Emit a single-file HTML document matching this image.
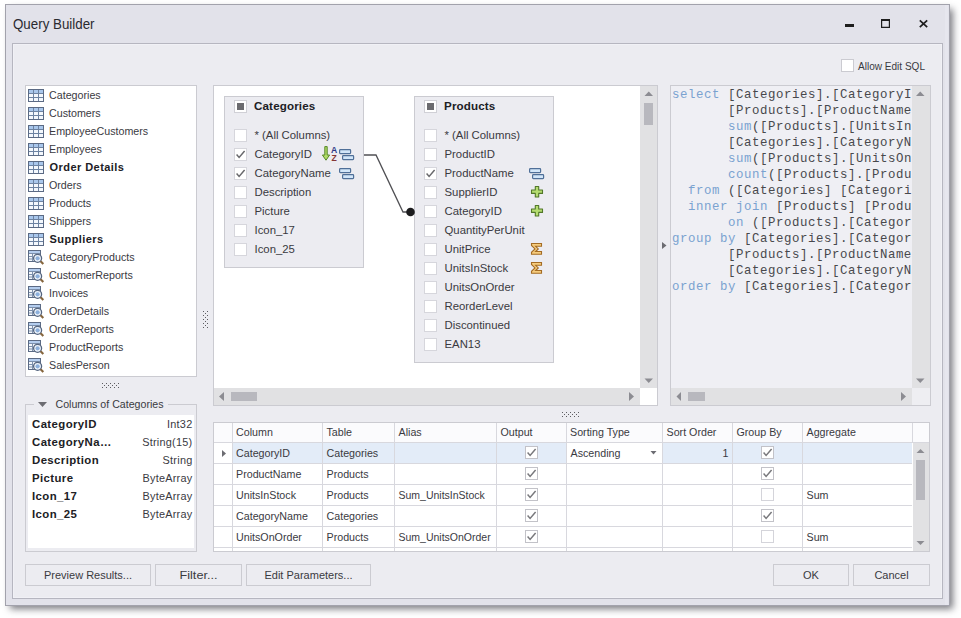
<!DOCTYPE html><html><head><meta charset="utf-8"><style>*{margin:0;padding:0}html,body{width:961px;height:618px;overflow:hidden;background:#fff}#sh{position:absolute;left:5px;top:4px;width:945px;height:602px;box-shadow:4px 4px 7px -1px rgba(40,40,50,.6);background:#e2e2ea}svg{position:absolute;left:0;top:0}text{font-family:"Liberation Sans",sans-serif}.m{font-family:"Liberation Mono",monospace}</style></head><body><div id="sh"></div>
<svg width="961" height="618" viewBox="0 0 961 618" shape-rendering="crispEdges">
<rect x="5" y="4" width="945" height="602" fill="#e2e2ea" />
<rect x="5" y="4" width="945" height="1" fill="#a2a2ac" />
<rect x="5" y="605" width="945" height="1" fill="#a2a2ac" />
<rect x="5" y="4" width="1" height="602" fill="#a2a2ac" />
<rect x="949" y="4" width="1" height="602" fill="#a2a2ac" />
<rect x="945" y="5" width="3" height="600" fill="#e6e6ee" />
<text x="13" y="29" font-size="14" fill="#2a2a30" textLength="81.5" lengthAdjust="spacingAndGlyphs" >Query Builder</text>
<rect x="845" y="24" width="9" height="3" fill="#1e1e1e" />
<path d="M881.6 19.5H889.4V27.4H881.6Z" fill="none" stroke="#1e1e1e" stroke-width="1.2" shape-rendering="auto"/>
<rect x="881" y="19" width="9" height="2" fill="#1e1e1e" />
<path d="M919.8 20.3 L927.2 27.2 M927.2 20.3 L919.8 27.2" stroke="#1e1e1e" stroke-width="1.7" shape-rendering="auto"/>
<rect x="12" y="43" width="931" height="556" fill="#ececf1" />
<rect x="12" y="43" width="931" height="1" fill="#b6b6c0" />
<rect x="12" y="598" width="931" height="1" fill="#b6b6c0" />
<rect x="12" y="43" width="1" height="556" fill="#b6b6c0" />
<rect x="942" y="43" width="1" height="556" fill="#b6b6c0" />
<rect x="13" y="44" width="929" height="1" fill="#f1f1f6" />
<rect x="13" y="597" width="929" height="1" fill="#f1f1f6" />
<rect x="13" y="44" width="1" height="554" fill="#f1f1f6" />
<rect x="941" y="44" width="1" height="554" fill="#f1f1f6" />
<rect x="841" y="59" width="13" height="13" fill="#fff" />
<rect x="841" y="59" width="13" height="1" fill="#cbcbd1" />
<rect x="841" y="71" width="13" height="1" fill="#cbcbd1" />
<rect x="841" y="59" width="1" height="13" fill="#cbcbd1" />
<rect x="853" y="59" width="1" height="13" fill="#cbcbd1" />
<text x="858" y="70" font-size="10.5" fill="#3a3a3f" textLength="67" lengthAdjust="spacingAndGlyphs" >Allow Edit SQL</text>
<rect x="25" y="85" width="172" height="292" fill="#ffffff" />
<rect x="25" y="85" width="172" height="1" fill="#cbcbd1" />
<rect x="25" y="376" width="172" height="1" fill="#cbcbd1" />
<rect x="25" y="85" width="1" height="292" fill="#cbcbd1" />
<rect x="196" y="85" width="1" height="292" fill="#cbcbd1" />
<g transform="translate(28,89)" shape-rendering="auto"><rect x="0.5" y="0.5" width="15" height="12" fill="#f4f8fd" stroke="#5b6a84"/><rect x="1" y="1" width="14" height="3.5" fill="#a9c7ec"/><path d="M1 4.5H15M1 8.5H15M5.5 1V12M10.5 1V12" stroke="#6d83a2" stroke-width="1"/></g>
<text x="49" y="99" font-size="10.7" fill="#3a3a3f" >Categories</text>
<g transform="translate(28,107)" shape-rendering="auto"><rect x="0.5" y="0.5" width="15" height="12" fill="#f4f8fd" stroke="#5b6a84"/><rect x="1" y="1" width="14" height="3.5" fill="#a9c7ec"/><path d="M1 4.5H15M1 8.5H15M5.5 1V12M10.5 1V12" stroke="#6d83a2" stroke-width="1"/></g>
<text x="49" y="117" font-size="10.7" fill="#3a3a3f" >Customers</text>
<g transform="translate(28,125)" shape-rendering="auto"><rect x="0.5" y="0.5" width="15" height="12" fill="#f4f8fd" stroke="#5b6a84"/><rect x="1" y="1" width="14" height="3.5" fill="#a9c7ec"/><path d="M1 4.5H15M1 8.5H15M5.5 1V12M10.5 1V12" stroke="#6d83a2" stroke-width="1"/></g>
<text x="49" y="135" font-size="10.7" fill="#3a3a3f" >EmployeeCustomers</text>
<g transform="translate(28,143)" shape-rendering="auto"><rect x="0.5" y="0.5" width="15" height="12" fill="#f4f8fd" stroke="#5b6a84"/><rect x="1" y="1" width="14" height="3.5" fill="#a9c7ec"/><path d="M1 4.5H15M1 8.5H15M5.5 1V12M10.5 1V12" stroke="#6d83a2" stroke-width="1"/></g>
<text x="49" y="153" font-size="10.7" fill="#3a3a3f" >Employees</text>
<g transform="translate(28,161)" shape-rendering="auto"><rect x="0.5" y="0.5" width="15" height="12" fill="#f4f8fd" stroke="#5b6a84"/><rect x="1" y="1" width="14" height="3.5" fill="#a9c7ec"/><path d="M1 4.5H15M1 8.5H15M5.5 1V12M10.5 1V12" stroke="#6d83a2" stroke-width="1"/></g>
<text x="49.5" y="171" font-size="11" fill="#202024" font-weight="bold" letter-spacing="0.45" >Order Details</text>
<g transform="translate(28,179)" shape-rendering="auto"><rect x="0.5" y="0.5" width="15" height="12" fill="#f4f8fd" stroke="#5b6a84"/><rect x="1" y="1" width="14" height="3.5" fill="#a9c7ec"/><path d="M1 4.5H15M1 8.5H15M5.5 1V12M10.5 1V12" stroke="#6d83a2" stroke-width="1"/></g>
<text x="49" y="189" font-size="10.7" fill="#3a3a3f" >Orders</text>
<g transform="translate(28,197)" shape-rendering="auto"><rect x="0.5" y="0.5" width="15" height="12" fill="#f4f8fd" stroke="#5b6a84"/><rect x="1" y="1" width="14" height="3.5" fill="#a9c7ec"/><path d="M1 4.5H15M1 8.5H15M5.5 1V12M10.5 1V12" stroke="#6d83a2" stroke-width="1"/></g>
<text x="49" y="207" font-size="10.7" fill="#3a3a3f" >Products</text>
<g transform="translate(28,215)" shape-rendering="auto"><rect x="0.5" y="0.5" width="15" height="12" fill="#f4f8fd" stroke="#5b6a84"/><rect x="1" y="1" width="14" height="3.5" fill="#a9c7ec"/><path d="M1 4.5H15M1 8.5H15M5.5 1V12M10.5 1V12" stroke="#6d83a2" stroke-width="1"/></g>
<text x="49" y="225" font-size="10.7" fill="#3a3a3f" >Shippers</text>
<g transform="translate(28,233)" shape-rendering="auto"><rect x="0.5" y="0.5" width="15" height="12" fill="#f4f8fd" stroke="#5b6a84"/><rect x="1" y="1" width="14" height="3.5" fill="#a9c7ec"/><path d="M1 4.5H15M1 8.5H15M5.5 1V12M10.5 1V12" stroke="#6d83a2" stroke-width="1"/></g>
<text x="49.5" y="243" font-size="11" fill="#202024" font-weight="bold" letter-spacing="0.45" >Suppliers</text>
<g transform="translate(28,250)" shape-rendering="auto"><rect x="0.5" y="0.5" width="12" height="11" fill="#f2f6fb" stroke="#5b6a84"/><rect x="1" y="1" width="11" height="2" fill="#b4cdee"/><path d="M1 3.5H12M4.5 3.5V11M1 6.5H4.5M1 9H4.5" stroke="#7d90ac" stroke-width="1"/><circle cx="9.6" cy="8.3" r="4" fill="#eef4fb" stroke="#55657f" stroke-width="1.3"/><circle cx="9.6" cy="8.3" r="2.1" fill="#8db0dc"/><path d="M12.6 11.2 L15.3 14" stroke="#86663e" stroke-width="2.1"/></g>
<text x="49" y="261" font-size="10.7" fill="#3a3a3f" >CategoryProducts</text>
<g transform="translate(28,268)" shape-rendering="auto"><rect x="0.5" y="0.5" width="12" height="11" fill="#f2f6fb" stroke="#5b6a84"/><rect x="1" y="1" width="11" height="2" fill="#b4cdee"/><path d="M1 3.5H12M4.5 3.5V11M1 6.5H4.5M1 9H4.5" stroke="#7d90ac" stroke-width="1"/><circle cx="9.6" cy="8.3" r="4" fill="#eef4fb" stroke="#55657f" stroke-width="1.3"/><circle cx="9.6" cy="8.3" r="2.1" fill="#8db0dc"/><path d="M12.6 11.2 L15.3 14" stroke="#86663e" stroke-width="2.1"/></g>
<text x="49" y="279" font-size="10.7" fill="#3a3a3f" >CustomerReports</text>
<g transform="translate(28,286)" shape-rendering="auto"><rect x="0.5" y="0.5" width="12" height="11" fill="#f2f6fb" stroke="#5b6a84"/><rect x="1" y="1" width="11" height="2" fill="#b4cdee"/><path d="M1 3.5H12M4.5 3.5V11M1 6.5H4.5M1 9H4.5" stroke="#7d90ac" stroke-width="1"/><circle cx="9.6" cy="8.3" r="4" fill="#eef4fb" stroke="#55657f" stroke-width="1.3"/><circle cx="9.6" cy="8.3" r="2.1" fill="#8db0dc"/><path d="M12.6 11.2 L15.3 14" stroke="#86663e" stroke-width="2.1"/></g>
<text x="49" y="297" font-size="10.7" fill="#3a3a3f" >Invoices</text>
<g transform="translate(28,304)" shape-rendering="auto"><rect x="0.5" y="0.5" width="12" height="11" fill="#f2f6fb" stroke="#5b6a84"/><rect x="1" y="1" width="11" height="2" fill="#b4cdee"/><path d="M1 3.5H12M4.5 3.5V11M1 6.5H4.5M1 9H4.5" stroke="#7d90ac" stroke-width="1"/><circle cx="9.6" cy="8.3" r="4" fill="#eef4fb" stroke="#55657f" stroke-width="1.3"/><circle cx="9.6" cy="8.3" r="2.1" fill="#8db0dc"/><path d="M12.6 11.2 L15.3 14" stroke="#86663e" stroke-width="2.1"/></g>
<text x="49" y="315" font-size="10.7" fill="#3a3a3f" >OrderDetails</text>
<g transform="translate(28,322)" shape-rendering="auto"><rect x="0.5" y="0.5" width="12" height="11" fill="#f2f6fb" stroke="#5b6a84"/><rect x="1" y="1" width="11" height="2" fill="#b4cdee"/><path d="M1 3.5H12M4.5 3.5V11M1 6.5H4.5M1 9H4.5" stroke="#7d90ac" stroke-width="1"/><circle cx="9.6" cy="8.3" r="4" fill="#eef4fb" stroke="#55657f" stroke-width="1.3"/><circle cx="9.6" cy="8.3" r="2.1" fill="#8db0dc"/><path d="M12.6 11.2 L15.3 14" stroke="#86663e" stroke-width="2.1"/></g>
<text x="49" y="333" font-size="10.7" fill="#3a3a3f" >OrderReports</text>
<g transform="translate(28,340)" shape-rendering="auto"><rect x="0.5" y="0.5" width="12" height="11" fill="#f2f6fb" stroke="#5b6a84"/><rect x="1" y="1" width="11" height="2" fill="#b4cdee"/><path d="M1 3.5H12M4.5 3.5V11M1 6.5H4.5M1 9H4.5" stroke="#7d90ac" stroke-width="1"/><circle cx="9.6" cy="8.3" r="4" fill="#eef4fb" stroke="#55657f" stroke-width="1.3"/><circle cx="9.6" cy="8.3" r="2.1" fill="#8db0dc"/><path d="M12.6 11.2 L15.3 14" stroke="#86663e" stroke-width="2.1"/></g>
<text x="49" y="351" font-size="10.7" fill="#3a3a3f" >ProductReports</text>
<g transform="translate(28,358)" shape-rendering="auto"><rect x="0.5" y="0.5" width="12" height="11" fill="#f2f6fb" stroke="#5b6a84"/><rect x="1" y="1" width="11" height="2" fill="#b4cdee"/><path d="M1 3.5H12M4.5 3.5V11M1 6.5H4.5M1 9H4.5" stroke="#7d90ac" stroke-width="1"/><circle cx="9.6" cy="8.3" r="4" fill="#eef4fb" stroke="#55657f" stroke-width="1.3"/><circle cx="9.6" cy="8.3" r="2.1" fill="#8db0dc"/><path d="M12.6 11.2 L15.3 14" stroke="#86663e" stroke-width="2.1"/></g>
<text x="49" y="369" font-size="10.7" fill="#3a3a3f" >SalesPerson</text>
<g shape-rendering="auto"></g>
<rect x="102" y="383" width="1" height="1" fill="#5c5c60" />
<rect x="106" y="383" width="1" height="1" fill="#5c5c60" />
<rect x="110" y="383" width="1" height="1" fill="#5c5c60" />
<rect x="114" y="383" width="1" height="1" fill="#5c5c60" />
<rect x="118" y="383" width="1" height="1" fill="#5c5c60" />
<rect x="104" y="385" width="1" height="1" fill="#5c5c60" />
<rect x="108" y="385" width="1" height="1" fill="#5c5c60" />
<rect x="112" y="385" width="1" height="1" fill="#5c5c60" />
<rect x="116" y="385" width="1" height="1" fill="#5c5c60" />
<rect x="102" y="387" width="1" height="1" fill="#5c5c60" />
<rect x="106" y="387" width="1" height="1" fill="#5c5c60" />
<rect x="110" y="387" width="1" height="1" fill="#5c5c60" />
<rect x="114" y="387" width="1" height="1" fill="#5c5c60" />
<rect x="118" y="387" width="1" height="1" fill="#5c5c60" />
<rect x="203" y="311" width="1" height="1" fill="#5c5c60" />
<rect x="203" y="315" width="1" height="1" fill="#5c5c60" />
<rect x="203" y="319" width="1" height="1" fill="#5c5c60" />
<rect x="203" y="323" width="1" height="1" fill="#5c5c60" />
<rect x="203" y="327" width="1" height="1" fill="#5c5c60" />
<rect x="207" y="311" width="1" height="1" fill="#5c5c60" />
<rect x="207" y="315" width="1" height="1" fill="#5c5c60" />
<rect x="207" y="319" width="1" height="1" fill="#5c5c60" />
<rect x="207" y="323" width="1" height="1" fill="#5c5c60" />
<rect x="207" y="327" width="1" height="1" fill="#5c5c60" />
<rect x="205" y="313" width="1" height="1" fill="#5c5c60" />
<rect x="205" y="317" width="1" height="1" fill="#5c5c60" />
<rect x="205" y="321" width="1" height="1" fill="#5c5c60" />
<rect x="205" y="325" width="1" height="1" fill="#5c5c60" />
<rect x="562" y="412" width="1" height="1" fill="#5c5c60" />
<rect x="566" y="412" width="1" height="1" fill="#5c5c60" />
<rect x="570" y="412" width="1" height="1" fill="#5c5c60" />
<rect x="574" y="412" width="1" height="1" fill="#5c5c60" />
<rect x="578" y="412" width="1" height="1" fill="#5c5c60" />
<rect x="564" y="414" width="1" height="1" fill="#5c5c60" />
<rect x="568" y="414" width="1" height="1" fill="#5c5c60" />
<rect x="572" y="414" width="1" height="1" fill="#5c5c60" />
<rect x="576" y="414" width="1" height="1" fill="#5c5c60" />
<rect x="562" y="416" width="1" height="1" fill="#5c5c60" />
<rect x="566" y="416" width="1" height="1" fill="#5c5c60" />
<rect x="570" y="416" width="1" height="1" fill="#5c5c60" />
<rect x="574" y="416" width="1" height="1" fill="#5c5c60" />
<rect x="578" y="416" width="1" height="1" fill="#5c5c60" />
<rect x="25" y="404" width="9" height="1" fill="#cbcbd1" />
<rect x="168" y="404" width="29" height="1" fill="#cbcbd1" />
<rect x="25" y="404" width="1" height="148" fill="#cbcbd1" />
<rect x="196" y="404" width="1" height="148" fill="#cbcbd1" />
<rect x="25" y="551" width="172" height="1" fill="#cbcbd1" />
<rect x="28" y="415" width="166" height="133" fill="#ffffff" />
<g shape-rendering="auto">
<polygon points="38,402 47,402 42.5,407" fill="#6c6c72"/>
</g>
<text x="55.5" y="408" font-size="10.5" fill="#3a3a3f" textLength="108" lengthAdjust="spacingAndGlyphs" >Columns of Categories</text>
<text x="32" y="428" font-size="11.4" fill="#202024" font-weight="bold" letter-spacing="0.4" >CategoryID</text>
<text x="192.5" y="428" font-size="10.9" fill="#3a3a3f" letter-spacing="0.25" text-anchor="end" >Int32</text>
<text x="32" y="446" font-size="11.4" fill="#202024" font-weight="bold" letter-spacing="0.4" >CategoryNa…</text>
<text x="192.5" y="446" font-size="10.9" fill="#3a3a3f" letter-spacing="0.25" text-anchor="end" >String(15)</text>
<text x="32" y="464" font-size="11.4" fill="#202024" font-weight="bold" letter-spacing="0.4" >Description</text>
<text x="192.5" y="464" font-size="10.9" fill="#3a3a3f" letter-spacing="0.25" text-anchor="end" >String</text>
<text x="32" y="482" font-size="11.4" fill="#202024" font-weight="bold" letter-spacing="0.4" >Picture</text>
<text x="192.5" y="482" font-size="10.9" fill="#3a3a3f" letter-spacing="0.25" text-anchor="end" >ByteArray</text>
<text x="32" y="500" font-size="11.4" fill="#202024" font-weight="bold" letter-spacing="0.4" >Icon_17</text>
<text x="192.5" y="500" font-size="10.9" fill="#3a3a3f" letter-spacing="0.25" text-anchor="end" >ByteArray</text>
<text x="32" y="518" font-size="11.4" fill="#202024" font-weight="bold" letter-spacing="0.4" >Icon_25</text>
<text x="192.5" y="518" font-size="10.9" fill="#3a3a3f" letter-spacing="0.25" text-anchor="end" >ByteArray</text>
<rect x="213" y="85" width="445" height="321" fill="#ffffff" />
<rect x="213" y="85" width="445" height="1" fill="#cbcbd1" />
<rect x="213" y="405" width="445" height="1" fill="#cbcbd1" />
<rect x="213" y="85" width="1" height="321" fill="#cbcbd1" />
<rect x="657" y="85" width="1" height="321" fill="#cbcbd1" />
<rect x="640" y="86" width="17" height="302" fill="#e1e1e3" />
<rect x="214" y="388" width="426" height="17" fill="#e1e1e3" />
<rect x="640" y="388" width="17" height="17" fill="#ffffff" />
<g shape-rendering="auto">
<polygon points="644.5,96 653,96 648.75,91.5" fill="#8c8c92"/>
<polygon points="644.5,378.5 653,378.5 648.75,383" fill="#8c8c92"/>
<polygon points="219,396.5 224,392 224,401" fill="#8c8c92"/>
<polygon points="634,396.5 629,392 629,401" fill="#8c8c92"/>
</g>
<rect x="644" y="103" width="9" height="22" fill="#b8b8be" />
<rect x="231" y="392" width="26" height="9" fill="#b8b8be" />
<g shape-rendering="auto">
<rect x="224" y="96" width="140" height="172" fill="#ececf1" />
<rect x="224" y="96" width="140" height="1" fill="#cbcbd1" />
<rect x="224" y="267" width="140" height="1" fill="#cbcbd1" />
<rect x="224" y="96" width="1" height="172" fill="#cbcbd1" />
<rect x="363" y="96" width="1" height="172" fill="#cbcbd1" />
<rect x="234" y="100" width="13" height="13" fill="#fff" />
<rect x="234" y="100" width="13" height="1" fill="#d0d0d6" />
<rect x="234" y="112" width="13" height="1" fill="#d0d0d6" />
<rect x="234" y="100" width="1" height="13" fill="#d0d0d6" />
<rect x="246" y="100" width="1" height="13" fill="#d0d0d6" />
<rect x="237" y="103" width="7" height="7" fill="#6a6a6e" />
<text x="254" y="110" font-size="11.6" fill="#202024" font-weight="bold" letter-spacing="0.15" >Categories</text>
<rect x="234" y="129" width="13" height="13" fill="#fff" />
<rect x="234" y="129" width="13" height="1" fill="#d6d6dc" />
<rect x="234" y="141" width="13" height="1" fill="#d6d6dc" />
<rect x="234" y="129" width="1" height="13" fill="#d6d6dc" />
<rect x="246" y="129" width="1" height="13" fill="#d6d6dc" />
<text x="254.5" y="139" font-size="11.35" fill="#3a3a3f" >* (All Columns)</text>
<rect x="234" y="148" width="13" height="13" fill="#fff" />
<rect x="234" y="148" width="13" height="1" fill="#d6d6dc" />
<rect x="234" y="160" width="13" height="1" fill="#d6d6dc" />
<rect x="234" y="148" width="1" height="13" fill="#d6d6dc" />
<rect x="246" y="148" width="1" height="13" fill="#d6d6dc" />
<path d="M236.6 154.6 L239.1 157.4 L244.6 151" fill="none" stroke="#68686c" stroke-width="1.5"/>
<text x="254.5" y="158" font-size="11.35" fill="#3a3a3f" >CategoryID</text>
<g transform="translate(322,146)" shape-rendering="auto"><path d="M2.8 0.6H5.2V9H7.6L4 14.2L0.4 9H2.8Z" fill="#b0dc68" stroke="#58882a" stroke-width="1"/><text x="12" y="6.6" font-size="8.6" font-weight="bold" fill="#2c3a86" text-anchor="middle">A</text><text x="12" y="14.6" font-size="8.6" font-weight="bold" fill="#843636" text-anchor="middle">Z</text></g>
<g transform="translate(339,149)" shape-rendering="auto"><rect x="0.6" y="0.6" width="11" height="4" rx="0.8" fill="#d2e6f9" stroke="#4f6f98" stroke-width="1.2"/><rect x="3.6" y="6.6" width="11" height="4" rx="0.8" fill="#d2e6f9" stroke="#4f6f98" stroke-width="1.2"/></g>
<rect x="234" y="167" width="13" height="13" fill="#fff" />
<rect x="234" y="167" width="13" height="1" fill="#d6d6dc" />
<rect x="234" y="179" width="13" height="1" fill="#d6d6dc" />
<rect x="234" y="167" width="1" height="13" fill="#d6d6dc" />
<rect x="246" y="167" width="1" height="13" fill="#d6d6dc" />
<path d="M236.6 173.6 L239.1 176.4 L244.6 170" fill="none" stroke="#68686c" stroke-width="1.5"/>
<text x="254.5" y="177" font-size="11.35" fill="#3a3a3f" >CategoryName</text>
<g transform="translate(339,168)" shape-rendering="auto"><rect x="0.6" y="0.6" width="11" height="4" rx="0.8" fill="#d2e6f9" stroke="#4f6f98" stroke-width="1.2"/><rect x="3.6" y="6.6" width="11" height="4" rx="0.8" fill="#d2e6f9" stroke="#4f6f98" stroke-width="1.2"/></g>
<rect x="234" y="186" width="13" height="13" fill="#fff" />
<rect x="234" y="186" width="13" height="1" fill="#d6d6dc" />
<rect x="234" y="198" width="13" height="1" fill="#d6d6dc" />
<rect x="234" y="186" width="1" height="13" fill="#d6d6dc" />
<rect x="246" y="186" width="1" height="13" fill="#d6d6dc" />
<text x="254.5" y="196" font-size="11.35" fill="#3a3a3f" >Description</text>
<rect x="234" y="205" width="13" height="13" fill="#fff" />
<rect x="234" y="205" width="13" height="1" fill="#d6d6dc" />
<rect x="234" y="217" width="13" height="1" fill="#d6d6dc" />
<rect x="234" y="205" width="1" height="13" fill="#d6d6dc" />
<rect x="246" y="205" width="1" height="13" fill="#d6d6dc" />
<text x="254.5" y="215" font-size="11.35" fill="#3a3a3f" >Picture</text>
<rect x="234" y="224" width="13" height="13" fill="#fff" />
<rect x="234" y="224" width="13" height="1" fill="#d6d6dc" />
<rect x="234" y="236" width="13" height="1" fill="#d6d6dc" />
<rect x="234" y="224" width="1" height="13" fill="#d6d6dc" />
<rect x="246" y="224" width="1" height="13" fill="#d6d6dc" />
<text x="254.5" y="234" font-size="11.35" fill="#3a3a3f" >Icon_17</text>
<rect x="234" y="243" width="13" height="13" fill="#fff" />
<rect x="234" y="243" width="13" height="1" fill="#d6d6dc" />
<rect x="234" y="255" width="13" height="1" fill="#d6d6dc" />
<rect x="234" y="243" width="1" height="13" fill="#d6d6dc" />
<rect x="246" y="243" width="1" height="13" fill="#d6d6dc" />
<text x="254.5" y="253" font-size="11.35" fill="#3a3a3f" >Icon_25</text>
<rect x="414" y="96" width="140" height="267" fill="#ececf1" />
<rect x="414" y="96" width="140" height="1" fill="#cbcbd1" />
<rect x="414" y="362" width="140" height="1" fill="#cbcbd1" />
<rect x="414" y="96" width="1" height="267" fill="#cbcbd1" />
<rect x="553" y="96" width="1" height="267" fill="#cbcbd1" />
<rect x="424" y="100" width="13" height="13" fill="#fff" />
<rect x="424" y="100" width="13" height="1" fill="#d0d0d6" />
<rect x="424" y="112" width="13" height="1" fill="#d0d0d6" />
<rect x="424" y="100" width="1" height="13" fill="#d0d0d6" />
<rect x="436" y="100" width="1" height="13" fill="#d0d0d6" />
<rect x="427" y="103" width="7" height="7" fill="#6a6a6e" />
<text x="444" y="110" font-size="11.6" fill="#202024" font-weight="bold" letter-spacing="0.15" >Products</text>
<rect x="424" y="129" width="13" height="13" fill="#fff" />
<rect x="424" y="129" width="13" height="1" fill="#d6d6dc" />
<rect x="424" y="141" width="13" height="1" fill="#d6d6dc" />
<rect x="424" y="129" width="1" height="13" fill="#d6d6dc" />
<rect x="436" y="129" width="1" height="13" fill="#d6d6dc" />
<text x="444.5" y="139" font-size="11.35" fill="#3a3a3f" >* (All Columns)</text>
<rect x="424" y="148" width="13" height="13" fill="#fff" />
<rect x="424" y="148" width="13" height="1" fill="#d6d6dc" />
<rect x="424" y="160" width="13" height="1" fill="#d6d6dc" />
<rect x="424" y="148" width="1" height="13" fill="#d6d6dc" />
<rect x="436" y="148" width="1" height="13" fill="#d6d6dc" />
<text x="444.5" y="158" font-size="11.35" fill="#3a3a3f" >ProductID</text>
<rect x="424" y="167" width="13" height="13" fill="#fff" />
<rect x="424" y="167" width="13" height="1" fill="#d6d6dc" />
<rect x="424" y="179" width="13" height="1" fill="#d6d6dc" />
<rect x="424" y="167" width="1" height="13" fill="#d6d6dc" />
<rect x="436" y="167" width="1" height="13" fill="#d6d6dc" />
<path d="M426.6 173.6 L429.1 176.4 L434.6 170" fill="none" stroke="#68686c" stroke-width="1.5"/>
<text x="444.5" y="177" font-size="11.35" fill="#3a3a3f" >ProductName</text>
<g transform="translate(529,168)" shape-rendering="auto"><rect x="0.6" y="0.6" width="11" height="4" rx="0.8" fill="#d2e6f9" stroke="#4f6f98" stroke-width="1.2"/><rect x="3.6" y="6.6" width="11" height="4" rx="0.8" fill="#d2e6f9" stroke="#4f6f98" stroke-width="1.2"/></g>
<rect x="424" y="186" width="13" height="13" fill="#fff" />
<rect x="424" y="186" width="13" height="1" fill="#d6d6dc" />
<rect x="424" y="198" width="13" height="1" fill="#d6d6dc" />
<rect x="424" y="186" width="1" height="13" fill="#d6d6dc" />
<rect x="436" y="186" width="1" height="13" fill="#d6d6dc" />
<text x="444.5" y="196" font-size="11.35" fill="#3a3a3f" >SupplierID</text>
<g transform="translate(531,186)" shape-rendering="auto"><path d="M4.3 0.5H7.7V4H11.5V7.4H7.7V11H4.3V7.4H0.5V4H4.3Z" fill="#b5dd70" stroke="#52782a" stroke-width="1.1" stroke-linejoin="round"/></g>
<rect x="424" y="205" width="13" height="13" fill="#fff" />
<rect x="424" y="205" width="13" height="1" fill="#d6d6dc" />
<rect x="424" y="217" width="13" height="1" fill="#d6d6dc" />
<rect x="424" y="205" width="1" height="13" fill="#d6d6dc" />
<rect x="436" y="205" width="1" height="13" fill="#d6d6dc" />
<text x="444.5" y="215" font-size="11.35" fill="#3a3a3f" >CategoryID</text>
<g transform="translate(531,205)" shape-rendering="auto"><path d="M4.3 0.5H7.7V4H11.5V7.4H7.7V11H4.3V7.4H0.5V4H4.3Z" fill="#b5dd70" stroke="#52782a" stroke-width="1.1" stroke-linejoin="round"/></g>
<rect x="424" y="224" width="13" height="13" fill="#fff" />
<rect x="424" y="224" width="13" height="1" fill="#d6d6dc" />
<rect x="424" y="236" width="13" height="1" fill="#d6d6dc" />
<rect x="424" y="224" width="1" height="13" fill="#d6d6dc" />
<rect x="436" y="224" width="1" height="13" fill="#d6d6dc" />
<text x="444.5" y="234" font-size="11.35" fill="#3a3a3f" >QuantityPerUnit</text>
<rect x="424" y="243" width="13" height="13" fill="#fff" />
<rect x="424" y="243" width="13" height="1" fill="#d6d6dc" />
<rect x="424" y="255" width="13" height="1" fill="#d6d6dc" />
<rect x="424" y="243" width="1" height="13" fill="#d6d6dc" />
<rect x="436" y="243" width="1" height="13" fill="#d6d6dc" />
<text x="444.5" y="253" font-size="11.35" fill="#3a3a3f" >UnitPrice</text>
<g transform="translate(531,243)" shape-rendering="auto"><path d="M0.5 0.5H10.5V3.3H4.6L7.3 5.9L4.6 8.5H10.5V11.3H0.5V9.3L4 5.9L0.5 2.5Z" fill="#f7cd7e" stroke="#a46c24" stroke-width="1.1"/></g>
<rect x="424" y="262" width="13" height="13" fill="#fff" />
<rect x="424" y="262" width="13" height="1" fill="#d6d6dc" />
<rect x="424" y="274" width="13" height="1" fill="#d6d6dc" />
<rect x="424" y="262" width="1" height="13" fill="#d6d6dc" />
<rect x="436" y="262" width="1" height="13" fill="#d6d6dc" />
<text x="444.5" y="272" font-size="11.35" fill="#3a3a3f" >UnitsInStock</text>
<g transform="translate(531,262)" shape-rendering="auto"><path d="M0.5 0.5H10.5V3.3H4.6L7.3 5.9L4.6 8.5H10.5V11.3H0.5V9.3L4 5.9L0.5 2.5Z" fill="#f7cd7e" stroke="#a46c24" stroke-width="1.1"/></g>
<rect x="424" y="281" width="13" height="13" fill="#fff" />
<rect x="424" y="281" width="13" height="1" fill="#d6d6dc" />
<rect x="424" y="293" width="13" height="1" fill="#d6d6dc" />
<rect x="424" y="281" width="1" height="13" fill="#d6d6dc" />
<rect x="436" y="281" width="1" height="13" fill="#d6d6dc" />
<text x="444.5" y="291" font-size="11.35" fill="#3a3a3f" >UnitsOnOrder</text>
<rect x="424" y="300" width="13" height="13" fill="#fff" />
<rect x="424" y="300" width="13" height="1" fill="#d6d6dc" />
<rect x="424" y="312" width="13" height="1" fill="#d6d6dc" />
<rect x="424" y="300" width="1" height="13" fill="#d6d6dc" />
<rect x="436" y="300" width="1" height="13" fill="#d6d6dc" />
<text x="444.5" y="310" font-size="11.35" fill="#3a3a3f" >ReorderLevel</text>
<rect x="424" y="319" width="13" height="13" fill="#fff" />
<rect x="424" y="319" width="13" height="1" fill="#d6d6dc" />
<rect x="424" y="331" width="13" height="1" fill="#d6d6dc" />
<rect x="424" y="319" width="1" height="13" fill="#d6d6dc" />
<rect x="436" y="319" width="1" height="13" fill="#d6d6dc" />
<text x="444.5" y="329" font-size="11.35" fill="#3a3a3f" >Discontinued</text>
<rect x="424" y="338" width="13" height="13" fill="#fff" />
<rect x="424" y="338" width="13" height="1" fill="#d6d6dc" />
<rect x="424" y="350" width="13" height="1" fill="#d6d6dc" />
<rect x="424" y="338" width="1" height="13" fill="#d6d6dc" />
<rect x="436" y="338" width="1" height="13" fill="#d6d6dc" />
<text x="444.5" y="348" font-size="11.35" fill="#3a3a3f" >EAN13</text>
<polyline points="364,155 376,155 403,212 410,212" fill="none" stroke="#505054" stroke-width="1.3"/>
<circle cx="410.5" cy="212" r="4.3" fill="#1c1c1e"/>
</g>
<g shape-rendering="auto">
<polygon points="662,242 666.5,245.5 662,249" fill="#6c6c72"/>
</g>
<rect x="670" y="85" width="261" height="321" fill="#efeff4" />
<rect x="670" y="85" width="261" height="1" fill="#cbcbd1" />
<rect x="670" y="405" width="261" height="1" fill="#cbcbd1" />
<rect x="670" y="85" width="1" height="321" fill="#cbcbd1" />
<rect x="930" y="85" width="1" height="321" fill="#cbcbd1" />
<rect x="912" y="86" width="18" height="302" fill="#e1e1e3" />
<rect x="671" y="388" width="241" height="17" fill="#e1e1e3" />
<rect x="912" y="388" width="18" height="17" fill="#eeeef2" />
<g shape-rendering="auto">
<polygon points="916,96 924.5,96 920.25,91.5" fill="#8c8c92"/>
<polygon points="916,378.5 924.5,378.5 920.25,383" fill="#8c8c92"/>
<polygon points="676.5,396.5 681,392 681,401" fill="#8c8c92"/>
<polygon points="906,396.5 901,392 901,401" fill="#8c8c92"/>
</g>
<rect x="688" y="392" width="17" height="9" fill="#b8b8be" />
<defs><clipPath id="sqlc"><rect x="671" y="86" width="241" height="302"/></clipPath></defs>
<g clip-path="url(#sqlc)" shape-rendering="auto">
<text class="m" x="672" y="98" font-size="12.4" letter-spacing="0.56" xml:space="preserve" style="white-space:pre"><tspan fill="#7aa2d0">select</tspan><tspan fill="#48484c"> [Categories].[CategoryID],</tspan></text>
<text class="m" x="672" y="114" font-size="12.4" letter-spacing="0.56" xml:space="preserve" style="white-space:pre"><tspan fill="#48484c">       [Products].[ProductName],</tspan></text>
<text class="m" x="672" y="130" font-size="12.4" letter-spacing="0.56" xml:space="preserve" style="white-space:pre"><tspan fill="#48484c">       </tspan><tspan fill="#7aa2d0">sum</tspan><tspan fill="#48484c">([Products].[UnitsInStock])</tspan></text>
<text class="m" x="672" y="146" font-size="12.4" letter-spacing="0.56" xml:space="preserve" style="white-space:pre"><tspan fill="#48484c">       [Categories].[CategoryName],</tspan></text>
<text class="m" x="672" y="162" font-size="12.4" letter-spacing="0.56" xml:space="preserve" style="white-space:pre"><tspan fill="#48484c">       </tspan><tspan fill="#7aa2d0">sum</tspan><tspan fill="#48484c">([Products].[UnitsOnOrder])</tspan></text>
<text class="m" x="672" y="178" font-size="12.4" letter-spacing="0.56" xml:space="preserve" style="white-space:pre"><tspan fill="#48484c">       </tspan><tspan fill="#7aa2d0">count</tspan><tspan fill="#48484c">([Products].[ProductID])</tspan></text>
<text class="m" x="672" y="194" font-size="12.4" letter-spacing="0.56" xml:space="preserve" style="white-space:pre"><tspan fill="#48484c">  </tspan><tspan fill="#7aa2d0">from</tspan><tspan fill="#48484c"> ([Categories] [Categories]</tspan></text>
<text class="m" x="672" y="210" font-size="12.4" letter-spacing="0.56" xml:space="preserve" style="white-space:pre"><tspan fill="#48484c">  </tspan><tspan fill="#7aa2d0">inner join</tspan><tspan fill="#48484c"> [Products] [Products]</tspan></text>
<text class="m" x="672" y="226" font-size="12.4" letter-spacing="0.56" xml:space="preserve" style="white-space:pre"><tspan fill="#48484c">       </tspan><tspan fill="#7aa2d0">on</tspan><tspan fill="#48484c"> ([Products].[CategoryID]</tspan></text>
<text class="m" x="672" y="242" font-size="12.4" letter-spacing="0.56" xml:space="preserve" style="white-space:pre"><tspan fill="#7aa2d0">group by</tspan><tspan fill="#48484c"> [Categories].[CategoryID],</tspan></text>
<text class="m" x="672" y="258" font-size="12.4" letter-spacing="0.56" xml:space="preserve" style="white-space:pre"><tspan fill="#48484c">       [Products].[ProductName],</tspan></text>
<text class="m" x="672" y="274" font-size="12.4" letter-spacing="0.56" xml:space="preserve" style="white-space:pre"><tspan fill="#48484c">       [Categories].[CategoryName]</tspan></text>
<text class="m" x="672" y="290" font-size="12.4" letter-spacing="0.56" xml:space="preserve" style="white-space:pre"><tspan fill="#7aa2d0">order by</tspan><tspan fill="#48484c"> [Categories].[CategoryID]</tspan></text>
</g>
<rect x="213" y="422" width="717" height="130" fill="#ffffff" />
<rect x="213" y="422" width="717" height="1" fill="#cbcbd1" />
<rect x="213" y="551" width="717" height="1" fill="#cbcbd1" />
<rect x="213" y="422" width="1" height="130" fill="#cbcbd1" />
<rect x="929" y="422" width="1" height="130" fill="#cbcbd1" />
<rect x="214" y="423" width="715" height="19" fill="#fbfbfd" />
<rect x="233" y="443" width="679" height="20" fill="#e3ecf8" />
<rect x="567" y="443" width="95" height="20" fill="#ffffff" />
<rect x="214" y="442" width="715" height="1" fill="#d8d8de" />
<rect x="232" y="423" width="1" height="128" fill="#d8d8de" />
<rect x="322" y="423" width="1" height="128" fill="#d8d8de" />
<rect x="394" y="423" width="1" height="128" fill="#d8d8de" />
<rect x="496" y="423" width="1" height="128" fill="#d8d8de" />
<rect x="566" y="423" width="1" height="128" fill="#d8d8de" />
<rect x="662" y="423" width="1" height="128" fill="#d8d8de" />
<rect x="732" y="423" width="1" height="128" fill="#d8d8de" />
<rect x="802" y="423" width="1" height="128" fill="#d8d8de" />
<rect x="912" y="423" width="1" height="19" fill="#d8d8de" />
<rect x="214" y="463" width="698" height="1" fill="#d8d8de" />
<rect x="214" y="484" width="698" height="1" fill="#d8d8de" />
<rect x="214" y="505" width="698" height="1" fill="#d8d8de" />
<rect x="214" y="526" width="698" height="1" fill="#d8d8de" />
<rect x="214" y="547" width="698" height="1" fill="#d8d8de" />
<rect x="913" y="443" width="16" height="108" fill="#e1e1e3" />
<g shape-rendering="auto">
<polygon points="916.5,453 924.5,453 920.5,449" fill="#8c8c92"/>
<polygon points="916.5,541 924.5,541 920.5,545" fill="#8c8c92"/>
<polygon points="222,450 226,453.5 222,457" fill="#6c6c72"/>
<polygon points="650.5,451 656.5,451 653.5,454.5" fill="#6c6c72"/>
</g>
<rect x="916" y="460" width="9" height="40" fill="#b8b8be" />
<text x="236" y="436" font-size="10.7" fill="#3a3a3f" >Column</text>
<text x="326.5" y="436" font-size="10.7" fill="#3a3a3f" >Table</text>
<text x="398.5" y="436" font-size="10.7" fill="#3a3a3f" >Alias</text>
<text x="500.5" y="436" font-size="10.7" fill="#3a3a3f" >Output</text>
<text x="570" y="436" font-size="10.7" fill="#3a3a3f" >Sorting Type</text>
<text x="666.5" y="436" font-size="10.7" fill="#3a3a3f" >Sort Order</text>
<text x="736.5" y="436" font-size="10.7" fill="#3a3a3f" >Group By</text>
<text x="806.5" y="436" font-size="10.7" fill="#3a3a3f" >Aggregate</text>
<g shape-rendering="auto">
<text x="236" y="457" font-size="10.7" fill="#3a3a3f" >CategoryID</text>
<text x="326.5" y="457" font-size="10.7" fill="#3a3a3f" >Categories</text>
<rect x="525" y="446" width="13" height="13" fill="#fff" />
<rect x="525" y="446" width="13" height="1" fill="#c2c2c8" />
<rect x="525" y="458" width="13" height="1" fill="#c2c2c8" />
<rect x="525" y="446" width="1" height="13" fill="#c2c2c8" />
<rect x="537" y="446" width="1" height="13" fill="#c2c2c8" />
<path d="M527.6 452.6 L530.1 455.4 L535.6 449" fill="none" stroke="#78787c" stroke-width="1.5"/>
<text x="570.5" y="457" font-size="10.7" fill="#3a3a3f" >Ascending</text>
<text x="728.5" y="457" font-size="10.7" fill="#3a3a3f" text-anchor="end" >1</text>
<rect x="761" y="446" width="13" height="13" fill="#fff" />
<rect x="761" y="446" width="13" height="1" fill="#c2c2c8" />
<rect x="761" y="458" width="13" height="1" fill="#c2c2c8" />
<rect x="761" y="446" width="1" height="13" fill="#c2c2c8" />
<rect x="773" y="446" width="1" height="13" fill="#c2c2c8" />
<path d="M763.6 452.6 L766.1 455.4 L771.6 449" fill="none" stroke="#78787c" stroke-width="1.5"/>
<text x="236" y="478" font-size="10.7" fill="#3a3a3f" >ProductName</text>
<text x="326.5" y="478" font-size="10.7" fill="#3a3a3f" >Products</text>
<rect x="525" y="467" width="13" height="13" fill="#fff" />
<rect x="525" y="467" width="13" height="1" fill="#c2c2c8" />
<rect x="525" y="479" width="13" height="1" fill="#c2c2c8" />
<rect x="525" y="467" width="1" height="13" fill="#c2c2c8" />
<rect x="537" y="467" width="1" height="13" fill="#c2c2c8" />
<path d="M527.6 473.6 L530.1 476.4 L535.6 470" fill="none" stroke="#78787c" stroke-width="1.5"/>
<rect x="761" y="467" width="13" height="13" fill="#fff" />
<rect x="761" y="467" width="13" height="1" fill="#c2c2c8" />
<rect x="761" y="479" width="13" height="1" fill="#c2c2c8" />
<rect x="761" y="467" width="1" height="13" fill="#c2c2c8" />
<rect x="773" y="467" width="1" height="13" fill="#c2c2c8" />
<path d="M763.6 473.6 L766.1 476.4 L771.6 470" fill="none" stroke="#78787c" stroke-width="1.5"/>
<text x="236" y="499" font-size="10.7" fill="#3a3a3f" >UnitsInStock</text>
<text x="326.5" y="499" font-size="10.7" fill="#3a3a3f" >Products</text>
<text x="398.5" y="499" font-size="10.5" fill="#3a3a3f" >Sum_UnitsInStock</text>
<rect x="525" y="488" width="13" height="13" fill="#fff" />
<rect x="525" y="488" width="13" height="1" fill="#c2c2c8" />
<rect x="525" y="500" width="13" height="1" fill="#c2c2c8" />
<rect x="525" y="488" width="1" height="13" fill="#c2c2c8" />
<rect x="537" y="488" width="1" height="13" fill="#c2c2c8" />
<path d="M527.6 494.6 L530.1 497.4 L535.6 491" fill="none" stroke="#78787c" stroke-width="1.5"/>
<rect x="761" y="488" width="13" height="13" fill="#fff" />
<rect x="761" y="488" width="13" height="1" fill="#d4d4da" />
<rect x="761" y="500" width="13" height="1" fill="#d4d4da" />
<rect x="761" y="488" width="1" height="13" fill="#d4d4da" />
<rect x="773" y="488" width="1" height="13" fill="#d4d4da" />
<text x="806.5" y="499" font-size="10.7" fill="#3a3a3f" >Sum</text>
<text x="236" y="520" font-size="10.7" fill="#3a3a3f" >CategoryName</text>
<text x="326.5" y="520" font-size="10.7" fill="#3a3a3f" >Categories</text>
<rect x="525" y="509" width="13" height="13" fill="#fff" />
<rect x="525" y="509" width="13" height="1" fill="#c2c2c8" />
<rect x="525" y="521" width="13" height="1" fill="#c2c2c8" />
<rect x="525" y="509" width="1" height="13" fill="#c2c2c8" />
<rect x="537" y="509" width="1" height="13" fill="#c2c2c8" />
<path d="M527.6 515.6 L530.1 518.4 L535.6 512" fill="none" stroke="#78787c" stroke-width="1.5"/>
<rect x="761" y="509" width="13" height="13" fill="#fff" />
<rect x="761" y="509" width="13" height="1" fill="#c2c2c8" />
<rect x="761" y="521" width="13" height="1" fill="#c2c2c8" />
<rect x="761" y="509" width="1" height="13" fill="#c2c2c8" />
<rect x="773" y="509" width="1" height="13" fill="#c2c2c8" />
<path d="M763.6 515.6 L766.1 518.4 L771.6 512" fill="none" stroke="#78787c" stroke-width="1.5"/>
<text x="236" y="541" font-size="10.7" fill="#3a3a3f" >UnitsOnOrder</text>
<text x="326.5" y="541" font-size="10.7" fill="#3a3a3f" >Products</text>
<text x="398.5" y="541" font-size="10.5" fill="#3a3a3f" >Sum_UnitsOnOrder</text>
<rect x="525" y="530" width="13" height="13" fill="#fff" />
<rect x="525" y="530" width="13" height="1" fill="#c2c2c8" />
<rect x="525" y="542" width="13" height="1" fill="#c2c2c8" />
<rect x="525" y="530" width="1" height="13" fill="#c2c2c8" />
<rect x="537" y="530" width="1" height="13" fill="#c2c2c8" />
<path d="M527.6 536.6 L530.1 539.4 L535.6 533" fill="none" stroke="#78787c" stroke-width="1.5"/>
<rect x="761" y="530" width="13" height="13" fill="#fff" />
<rect x="761" y="530" width="13" height="1" fill="#d4d4da" />
<rect x="761" y="542" width="13" height="1" fill="#d4d4da" />
<rect x="761" y="530" width="1" height="13" fill="#d4d4da" />
<rect x="773" y="530" width="1" height="13" fill="#d4d4da" />
<text x="806.5" y="541" font-size="10.7" fill="#3a3a3f" >Sum</text>
</g>
<rect x="25" y="564" width="126" height="22" fill="#ececf1" />
<rect x="25" y="564" width="126" height="1" fill="#cbcbd1" />
<rect x="25" y="585" width="126" height="1" fill="#cbcbd1" />
<rect x="25" y="564" width="1" height="22" fill="#cbcbd1" />
<rect x="150" y="564" width="1" height="22" fill="#cbcbd1" />
<text x="88.0" y="579" font-size="11" fill="#3a3a3f" text-anchor="middle" >Preview Results...</text>
<rect x="155" y="564" width="87" height="22" fill="#ececf1" />
<rect x="155" y="564" width="87" height="1" fill="#cbcbd1" />
<rect x="155" y="585" width="87" height="1" fill="#cbcbd1" />
<rect x="155" y="564" width="1" height="22" fill="#cbcbd1" />
<rect x="241" y="564" width="1" height="22" fill="#cbcbd1" />
<text x="198.5" y="579" font-size="11" fill="#3a3a3f" text-anchor="middle" textLength="38" lengthAdjust="spacingAndGlyphs" >Filter...</text>
<rect x="246" y="564" width="125" height="22" fill="#ececf1" />
<rect x="246" y="564" width="125" height="1" fill="#cbcbd1" />
<rect x="246" y="585" width="125" height="1" fill="#cbcbd1" />
<rect x="246" y="564" width="1" height="22" fill="#cbcbd1" />
<rect x="370" y="564" width="1" height="22" fill="#cbcbd1" />
<text x="308.5" y="579" font-size="11" fill="#3a3a3f" text-anchor="middle" >Edit Parameters...</text>
<rect x="773" y="564" width="76" height="22" fill="#ececf1" />
<rect x="773" y="564" width="76" height="1" fill="#cbcbd1" />
<rect x="773" y="585" width="76" height="1" fill="#cbcbd1" />
<rect x="773" y="564" width="1" height="22" fill="#cbcbd1" />
<rect x="848" y="564" width="1" height="22" fill="#cbcbd1" />
<text x="811.0" y="579" font-size="11" fill="#3a3a3f" text-anchor="middle" >OK</text>
<rect x="853" y="564" width="77" height="22" fill="#ececf1" />
<rect x="853" y="564" width="77" height="1" fill="#cbcbd1" />
<rect x="853" y="585" width="77" height="1" fill="#cbcbd1" />
<rect x="853" y="564" width="1" height="22" fill="#cbcbd1" />
<rect x="929" y="564" width="1" height="22" fill="#cbcbd1" />
<text x="891.5" y="579" font-size="11" fill="#3a3a3f" text-anchor="middle" >Cancel</text>
</svg></body></html>
